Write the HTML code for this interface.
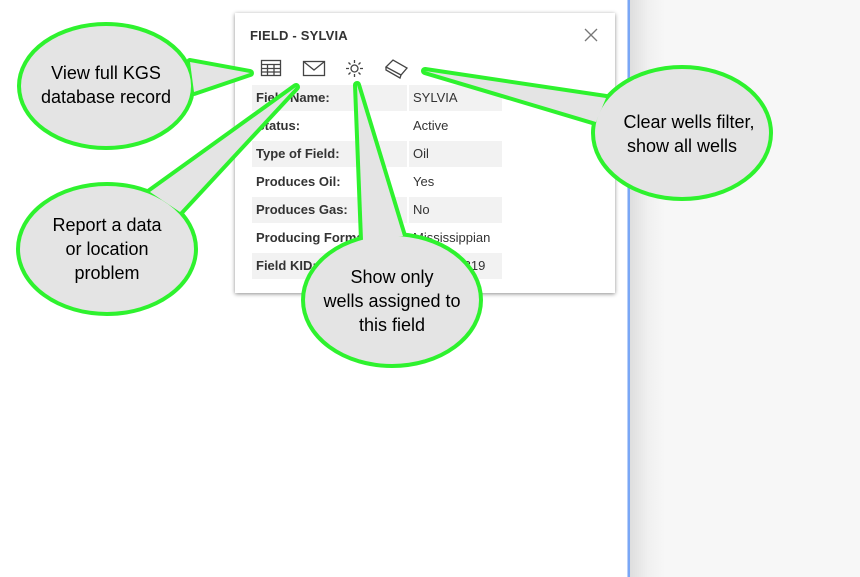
<!DOCTYPE html>
<html><head><meta charset="utf-8"><style>
*{margin:0;padding:0;box-sizing:border-box}
body{width:860px;height:577px;background:#fff;position:relative;overflow:hidden;font-family:"Liberation Sans",Arial,sans-serif}
#right{position:absolute;left:630px;top:0;width:230px;height:577px;background:linear-gradient(to right,#dedede 0,#f0f0f0 18px,#f7f7f7 35px,#f7f7f7 100%)}
#blue{position:absolute;left:627px;top:0;width:3px;height:577px;background:#7aa7f5;border-left:1px solid #b9d0fa}
#pop{position:absolute;left:235px;top:13px;width:380px;height:280px;background:#fff;box-shadow:0 1px 4px rgba(0,0,0,.45)}
#title{position:absolute;left:15px;top:15px;font-size:13px;font-weight:bold;color:#333;letter-spacing:.2px}
.row{position:absolute;left:17px;height:26px;font-size:13px;color:#333}
.row div{position:absolute;top:0;height:26px;line-height:26px;padding-left:4px}
.l{left:0;width:155px;font-weight:bold}
.v{left:157px;width:93px}
.s .l,.s .v{background:#f2f2f2}
svg{position:absolute;left:0;top:0}
</style></head><body>
<div id="right"></div><div id="blue"></div>
<div id="pop">
<div id="title">FIELD - SYLVIA</div>
<svg width="380" height="80" style="left:0;top:0">
<g stroke="#444" stroke-width="1.3" fill="none">
<path d="M350 16 L362 28 M362 16 L350 28" stroke="#777"/>
<rect x="26.5" y="47.5" width="19" height="15"/><path d="M26.5 51.5H45.5M26.5 55.5H45.5M26.5 59H45.5M32.5 51.5V62.5M39 51.5V62.5"/>
<rect x="68.5" y="48.5" width="21" height="14"/><path d="M68.5 48.5L79 57L89.5 48.5"/>
<circle cx="119.5" cy="55.5" r="3.5"/><path d="M119.5 47V50M119.5 61V64M111 55.5H114M125 55.5H128M113.5 49.5L115.5 51.5M123.5 59.5L125.5 61.5M125.5 49.5L123.5 51.5M115.5 59.5L113.5 61.5"/>
<path d="M151 54L158 47L172 55L166 62Z M151 54L151 57L165 65L166 62"/>
</g></svg>
<div class="row s" style="top:72px"><div class="l">Field Name:</div><div class="v">SYLVIA</div></div>
<div class="row" style="top:100px"><div class="l">Status:</div><div class="v">Active</div></div>
<div class="row s" style="top:128px"><div class="l">Type of Field:</div><div class="v">Oil</div></div>
<div class="row" style="top:156px"><div class="l">Produces Oil:</div><div class="v">Yes</div></div>
<div class="row s" style="top:184px"><div class="l">Produces Gas:</div><div class="v">No</div></div>
<div class="row" style="top:212px"><div class="l">Producing Formation:</div><div class="v">Mississippian</div></div>
<div class="row s" style="top:240px"><div class="l">Field KID:</div><div class="v">1000140819</div></div>
</div>
<svg width="860" height="577">
<defs>
<g id="b1"><polygon points="190,62 250,73 194,92"/><ellipse cx="106" cy="86" rx="85" ry="60"/></g>
<g id="b2"><polygon points="150,192 296,87 180,212"/><ellipse cx="107" cy="249" rx="87" ry="63"/></g>
<g id="b3"><polygon points="363,240 357,85 403,236"/><ellipse cx="392" cy="300" rx="87" ry="64"/></g>
<g id="b4"><polygon points="606,98 425,71 596,122"/><ellipse cx="682" cy="133" rx="87" ry="64"/></g>
</defs>
<g stroke="#2ef22e" stroke-width="8" fill="#2ef22e" stroke-linejoin="round">
<use href="#b1"/><use href="#b2"/><use href="#b3"/><use href="#b4"/>
</g>
<g fill="#e4e4e4" stroke="none">
<use href="#b1"/><use href="#b2"/><use href="#b3"/><use href="#b4"/>
</g>
<g font-family="Liberation Sans,Arial,sans-serif" font-size="18" fill="#000" text-anchor="middle">
<text x="106" y="79">View full KGS</text><text x="106" y="103">database record</text>
<text x="107" y="231">Report a data</text><text x="107" y="255">or location</text><text x="107" y="279">problem</text>
<text x="392" y="283">Show only</text><text x="392" y="307">wells assigned to</text><text x="392" y="331">this field</text>
<text x="689" y="128">Clear wells filter,</text><text x="682" y="152">show all wells</text>
</g></svg>
</body></html>
